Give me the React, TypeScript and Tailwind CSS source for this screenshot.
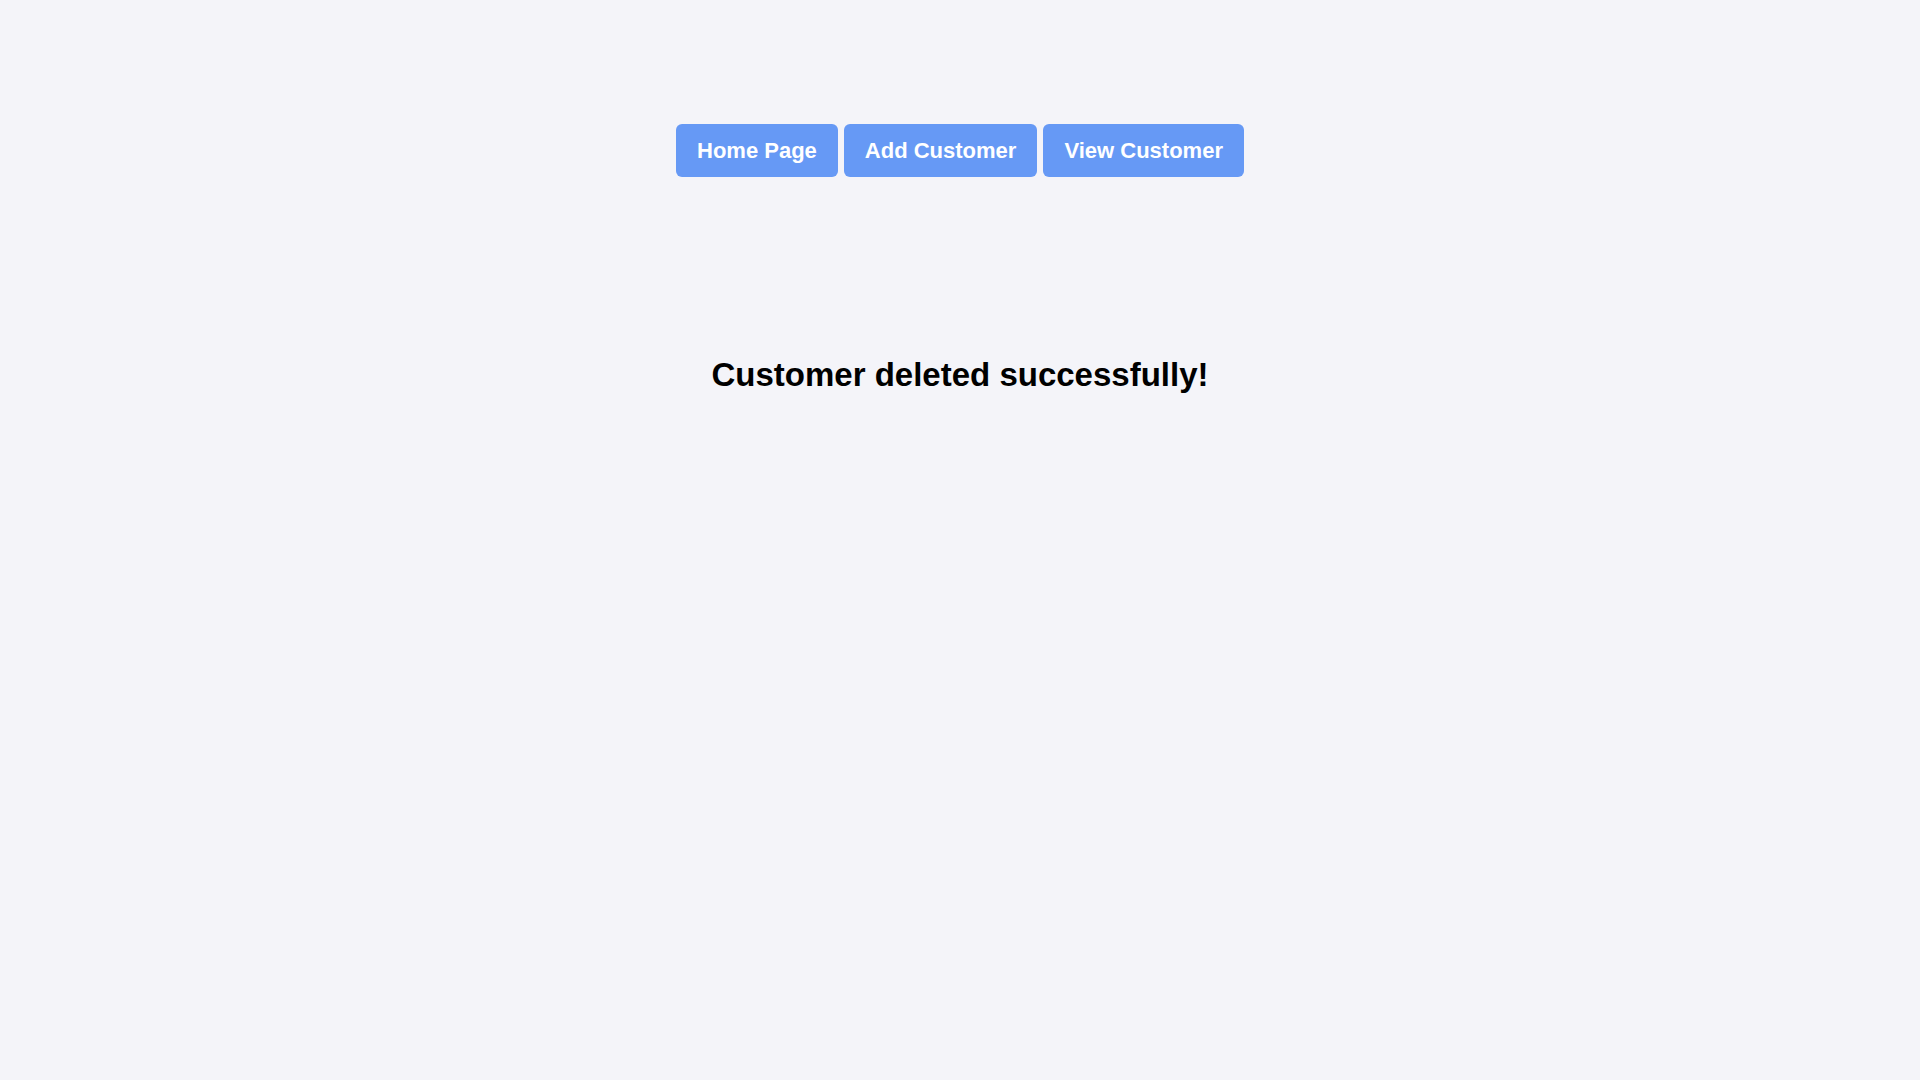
import React from "react";

export default function App() {
  const btn =
    "h-[53px] px-[21px] rounded-[6px] bg-[#6699f5] text-white font-bold text-[22px] leading-none";
  return (
    <div
      className="min-h-screen w-full bg-[#f4f4f9] flex flex-col items-center"
      style={{ fontFamily: '"Liberation Sans", Arial, sans-serif' }}
    >
      <div className="pt-[124px] flex gap-[6px]">
        <button className={btn}>Home Page</button>
        <button className={btn}>Add Customer</button>
        <button className={btn}>View Customer</button>
      </div>
      <h1 className="mt-[179px] text-[33px] font-bold text-black leading-[37px]">
        Customer deleted successfully!
      </h1>
    </div>
  );
}
